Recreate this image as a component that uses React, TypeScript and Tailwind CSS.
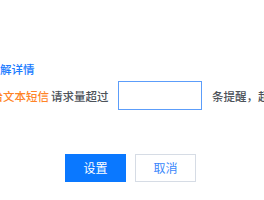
import React from "react";

export default function App() {
  return (
    <div
      className="w-[264px] h-[200px] bg-white overflow-hidden"
      style={{ fontFamily: '"Noto Sans CJK SC", "Noto Sans", sans-serif' }}
    >
      <div className="flex flex-col pt-[61px]">
        <div className="ml-[-11.5px] h-[16px] leading-[16px] text-[11.5px] font-medium text-[#1b7cff] whitespace-nowrap">
          了解详情
        </div>
        <div className="ml-[-8.5px] mt-[4px] flex items-center whitespace-nowrap text-[11.5px] font-medium leading-[16px]">
          <span className="text-[#ff8427]">给文本短信</span>
          <span className="ml-[2px] text-[#4d5259]">请求量超过</span>
          <input
            className="ml-[9.5px] w-[84px] h-[29px] border border-[#5c9dfa] outline-none bg-white"
            defaultValue=""
          />
          <span className="ml-[10px] text-[#4d5259]">条提醒，超过</span>
        </div>
        <div className="mt-[44px] ml-[65px] flex gap-[9px]">
          <button className="w-[61px] h-[28px] bg-[#0a78ff] text-white text-[12px] leading-[28px]">
            设置
          </button>
          <button className="w-[61px] h-[28px] bg-white border border-[#d6dce5] text-[#3a87fb] text-[12px] leading-[26px]">
            取消
          </button>
        </div>
      </div>
    </div>
  );
}
